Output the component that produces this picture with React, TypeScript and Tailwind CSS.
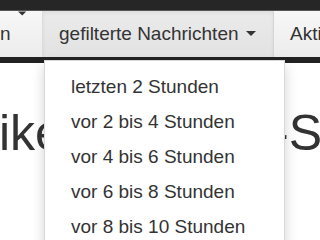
import React from "react";

function Caret() {
  return (
    <svg width="10" height="5" viewBox="0 0 10 5" className="inline-block ml-[7px] mb-[3px]">
      <polygon points="0,0 10,0 5,5" fill="#333" />
    </svg>
  );
}

export default function App() {
  const items = [
    "letzten 2 Stunden",
    "vor 2 bis 4 Stunden",
    "vor 4 bis 6 Stunden",
    "vor 6 bis 8 Stunden",
    "vor 8 bis 10 Stunden",
    "vor 10 bis 12 Stunden",
  ];
  return (
    <div
      className="relative w-[320px] h-[240px] overflow-hidden bg-white text-[#333]"
      style={{ fontFamily: '"Liberation Sans", Arial, sans-serif' }}
    >
      <div className="h-[11px] bg-[#262626] border-b border-[#555]" />
      <div className="flex h-[46px] bg-gradient-to-b from-[#f7f7f7] to-[#ececec] text-[19px] leading-[46px] whitespace-nowrap">
        <div className="w-[43px] shrink-0 border-r border-[#dcdcdc] overflow-hidden flex justify-end pr-[16px]">
          <span>n</span>
          <Caret />
        </div>
        <div className="w-[231px] shrink-0 bg-gradient-to-b from-[#ebebeb] to-[#e2e2e2] border-r border-[#d5d5d5] pl-[16px] shadow-[inset_0_2px_4px_rgba(0,0,0,0.06)]">
          <span>gefilterte Nachrichten</span>
          <Caret />
        </div>
        <div className="pl-[16px]">Aktivitäten</div>
      </div>
      <div className="h-[6px] bg-[#222]" />
      <div className="flex justify-between mt-[45px] text-[50px] leading-[50px] text-[#333] whitespace-nowrap">
        <span className="ml-[-1px]">ike</span>
        <span className="mr-[-16px]">-St</span>
      </div>
      <div className="absolute left-[44px] top-[60px] w-[241px] h-[200px] bg-white border border-[#d8d8d8] shadow-[0_6px_12px_rgba(0,0,0,0.175)] pt-[8px]">
        {items.map((t) => (
          <div key={t} className="h-[35px] leading-[35px] pl-[26px] text-[19px] text-[#333] whitespace-nowrap">
            {t}
          </div>
        ))}
      </div>
    </div>
  );
}
